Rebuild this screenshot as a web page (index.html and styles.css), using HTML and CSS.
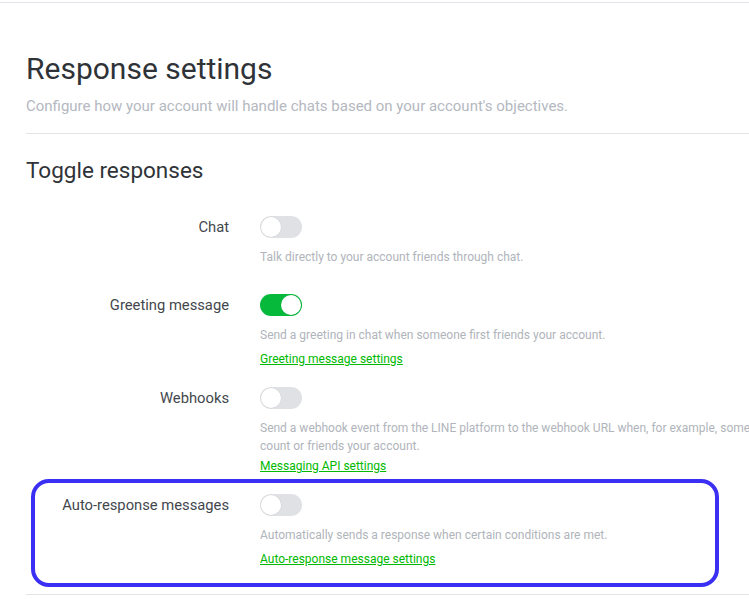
FILE: index.html
```html
<!DOCTYPE html>
<html lang="en">
<head>
<meta charset="utf-8">
<title>Response settings</title>
<link rel="stylesheet" href="styles.css">
</head>
<body>
<div class="topbar"></div>
<main class="page">
  <header class="page-head">
    <h1 class="title">Response settings</h1>
    <p class="subtitle">Configure how your account will handle chats based on your account's objectives.</p>
  </header>
  <section class="section">
    <h2 class="section-title">Toggle responses</h2>
    <div class="rows">
      <div class="row">
        <div class="label">Chat</div>
        <div class="control">
          <span class="toggle"><span class="knob"></span></span>
          <p class="desc desc-only">Talk directly to your account friends through chat.</p>
        </div>
      </div>
      <div class="row">
        <div class="label">Greeting message</div>
        <div class="control">
          <span class="toggle on"><span class="knob"></span></span>
          <p class="desc">Send a greeting in chat when someone first friends your account.</p>
          <a class="link" href="#">Greeting message settings</a>
        </div>
      </div>
      <div class="row">
        <div class="label">Webhooks</div>
        <div class="control">
          <span class="toggle"><span class="knob"></span></span>
          <p class="desc desc-multi">Send a webhook event from the LINE platform to the webhook URL when, for example, someone sends a message to your ac<br>count or friends your account.</p>
          <a class="link" href="#">Messaging API settings</a>
        </div>
      </div>
      <div class="row highlighted">
        <div class="label">Auto-response messages</div>
        <div class="control">
          <span class="toggle"><span class="knob"></span></span>
          <p class="desc">Automatically sends a response when certain conditions are met.</p>
          <a class="link" href="#">Auto-response message settings</a>
        </div>
      </div>
    </div>
  </section>
</main>
</body>
</html>
```

FILE: styles.css
```css
html, body {
  margin: 0;
  padding: 0;
  overflow: hidden;
  background: #ffffff;
}

body {
  font-family: Roboto, "Liberation Sans", sans-serif;
  color: #2e3238;
}

.topbar {
  height: 2px;
  border-bottom: 1px solid #e3e4e9;
}

.page {
  width: 1000px;
  padding-left: 26px;
}

.page-head {
  border-bottom: 1px solid #e3e4e8;
  padding-bottom: 17px;
}

.title {
  margin: 48px 0 0;
  font-size: 30px;
  line-height: 36px;
  font-weight: 400;
  color: #2f3338;
}

.subtitle {
  margin: 9px 0 0;
  font-size: 15px;
  line-height: 20px;
  color: #b4b8bf;
}

.section {
  border-bottom: 1px solid #e3e4e8;
  padding-bottom: 26px;
}

.section-title {
  margin: 22px 0 0;
  font-size: 22.5px;
  line-height: 28px;
  font-weight: 400;
  color: #2f3338;
}

.rows {
  display: flex;
  flex-direction: column;
  padding-top: 32px;
  gap: 19px;
}

.row {
  display: flex;
  position: relative;
}

.label {
  width: 203px;
  padding-right: 31px;
  text-align: right;
  font-size: 14.75px;
  line-height: 22px;
  color: #43474d;
}

.control {
  display: flex;
  flex-direction: column;
  align-items: flex-start;
}

.toggle {
  display: block;
  position: relative;
  width: 42px;
  height: 22px;
  border-radius: 11px;
  background: #dfe1e5;
}

.knob {
  position: absolute;
  top: 1px;
  left: 1px;
  width: 20px;
  height: 20px;
  border-radius: 50%;
  background: #ffffff;
  box-shadow: 0 0 0 0.5px rgba(0, 0, 0, 0.06);
}

.toggle.on {
  background: #06b93a;
}

.toggle.on .knob {
  left: 21px;
}

.desc {
  margin: 10px 0 0;
  font-size: 12px;
  line-height: 18px;
  color: #b0b4bb;
  white-space: nowrap;
}

.desc-only {
  margin-bottom: 9px;
}

.link {
  margin-top: 6px;
  font-size: 12px;
  line-height: 18px;
  color: #00b900;
  text-decoration: underline;
}

.desc-multi + .link {
  margin-top: 2px;
}

.highlighted::before {
  content: "";
  position: absolute;
  left: 5px;
  top: -15px;
  width: 688px;
  height: 108px;
  box-sizing: border-box;
  border: 4px solid #3a2ff2;
  border-radius: 18px;
  pointer-events: none;
}
```
